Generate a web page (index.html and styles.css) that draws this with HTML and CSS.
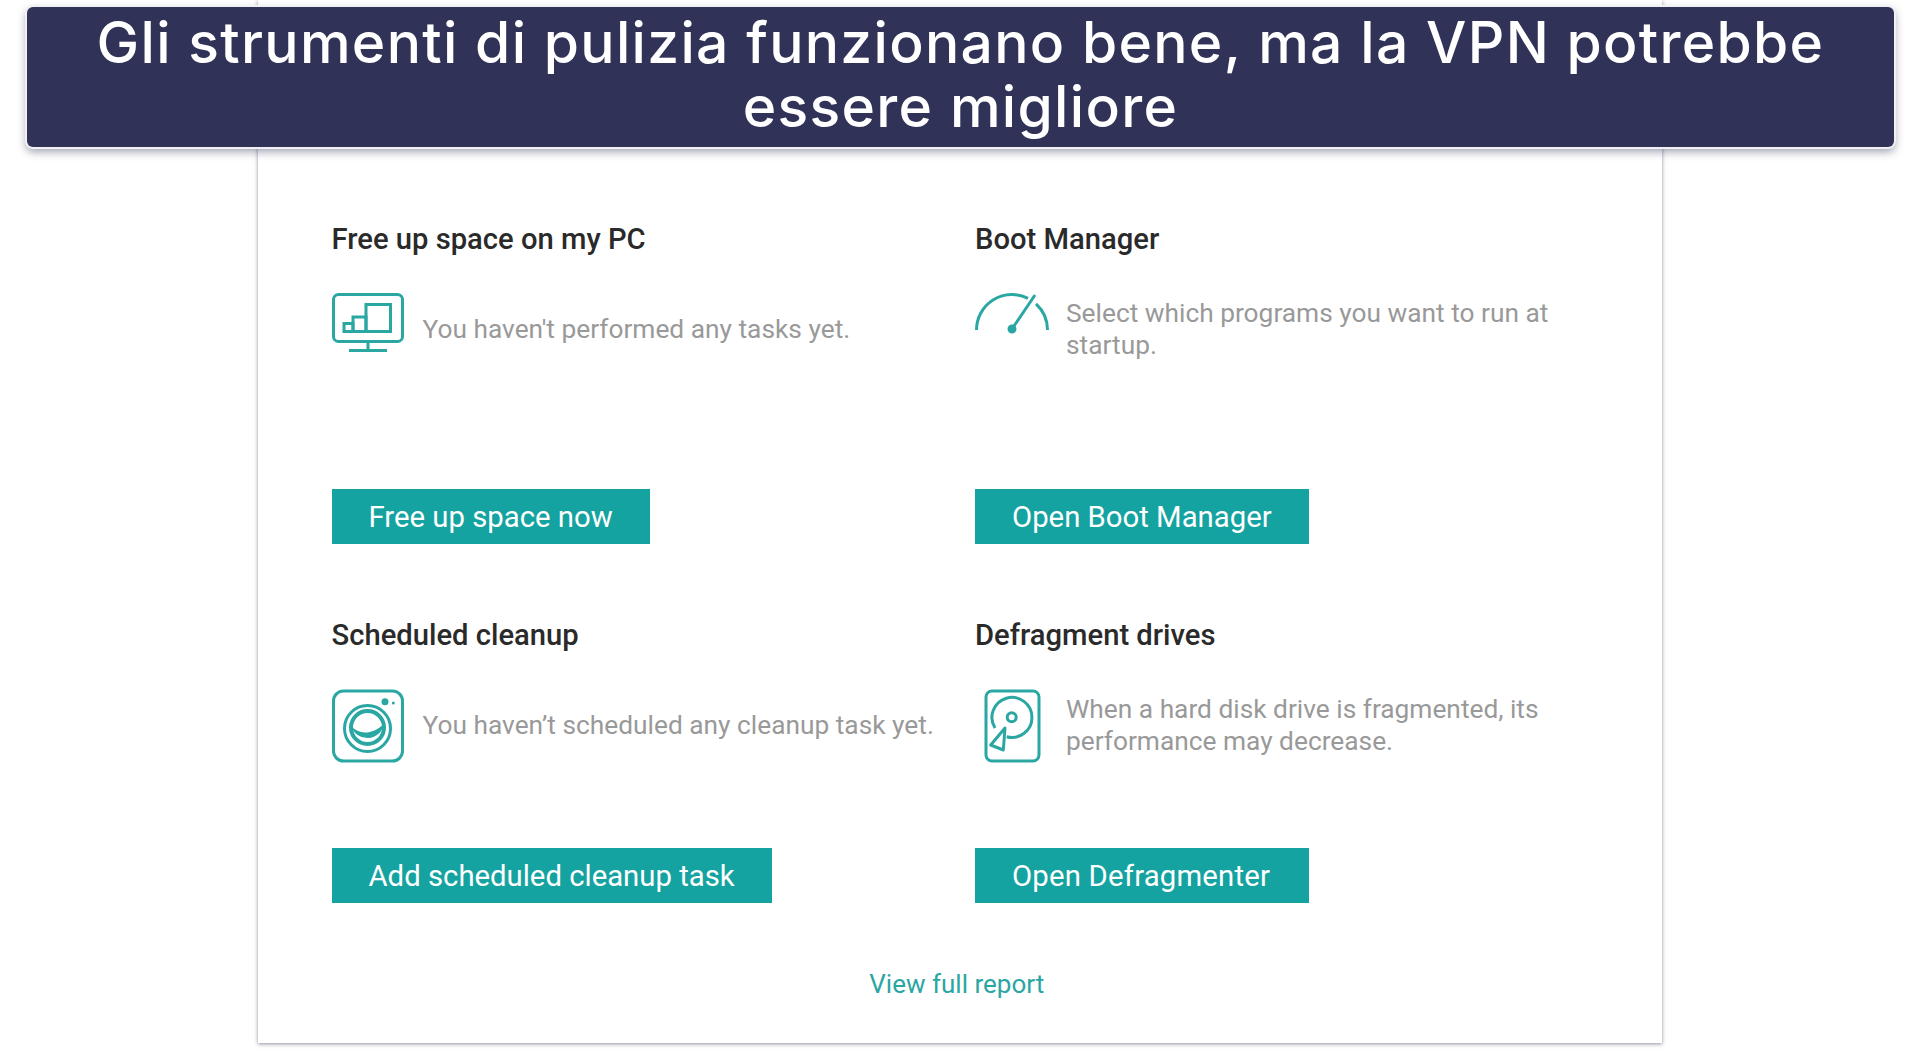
FILE: index.html
```html
<!DOCTYPE html>
<html lang="en">
<head>
    <meta charset="UTF-8">
    <meta name="viewport" content="width=device-width, initial-scale=1.0">
    <title>Gli strumenti di pulizia</title>
    <link rel="stylesheet" href="styles.css">
</head>
<body>
    <div class="card">
        <div class="grid">
            <div class="tool">
                <h2>Free up space on my PC</h2>
                <div class="info">
                    <svg class="icon" viewBox="0 0 74 74" fill="none" stroke="#2aa6a3" stroke-width="3">
                        <rect x="1.5" y="1.5" width="69" height="47" rx="5"/>
                        <path d="M36 49v8M17 57.500h38"/>
                        <rect x="34" y="11.500" width="24.500" height="27"/>
                        <rect x="21" y="24" width="13" height="14.500"/>
                        <rect x="12" y="30.500" width="9" height="8"/>
                    </svg>
                    <p>You haven't performed any tasks yet.</p>
                </div>
                <a class="btn" href="#">Free up space now</a>
            </div>
            <div class="tool">
                <h2>Boot Manager</h2>
                <div class="info">
                    <svg class="icon" viewBox="0 0 74 74" fill="none" stroke="#2aa6a3" stroke-width="3">
                        <path d="M1.500 37A35.500 35.500 0 0 1 53 5.300M61 10.800A35.500 35.500 0 0 1 72.500 37"/>
                        <path d="M37 36L60 2"/>
                        <circle cx="37" cy="36" r="3" fill="#2aa6a3"/>
                    </svg>
                    <p>Select which programs you want to run at startup.</p>
                </div>
                <a class="btn" href="#">Open Boot Manager</a>
            </div>
            <div class="tool">
                <h2>Scheduled cleanup</h2>
                <div class="info">
                    <svg class="icon" viewBox="0 0 74 74" fill="none" stroke="#2aa6a3" stroke-width="3">
                        <rect x="1.500" y="2" width="69" height="70" rx="10"/>
                        <circle cx="35.500" cy="39.500" r="23"/>
                        <circle cx="35.500" cy="38.500" r="16.500" stroke-width="4"/>
                        <path d="M19 37C27 46 40 46 52 35A17 17 0 0 1 19 37z" fill="#2aa6a3" stroke="none"/>
                        <circle cx="53" cy="12.700" r="3.500" fill="#2aa6a3" stroke="none"/>
                        <circle cx="61.300" cy="14" r="1.500" fill="#2aa6a3" stroke="none"/>
                    </svg>
                    <p>You haven’t scheduled any cleanup task yet.</p>
                </div>
                <a class="btn" href="#">Add scheduled cleanup task</a>
            </div>
            <div class="tool">
                <h2>Defragment drives</h2>
                <div class="info">
                    <svg class="icon" viewBox="0 0 74 74" fill="none" stroke="#2aa6a3" stroke-width="3">
                        <rect x="11" y="2" width="53" height="70" rx="6"/>
                        <path d="M31.700 47.700A20 20 0 1 0 20 39"/>
                        <circle cx="36.700" cy="28.300" r="4.500"/>
                        <path d="M30 39L15.700 56L28.300 61z" stroke-linejoin="round"/>
                    </svg>
                    <p>When a hard disk drive is fragmented, its performance may decrease.</p>
                </div>
                <a class="btn btn-wide" href="#">Open Defragmenter</a>
            </div>
        </div>
        <a class="report" href="#">View full report</a>
    </div>
    <div class="banner">Gli strumenti di pulizia funzionano bene, ma la VPN potrebbe essere migliore</div>
</body>
</html>
```

FILE: styles.css
```css
html, body {
    height: 100%;
}
body {
    font-family: Roboto, sans-serif;
    margin: 0;
    padding: 0;
    background-color: #fff;
    overflow: hidden;
}
.banner {
    position: absolute;
    top: 7px;
    left: 27px;
    width: 1867px;
    height: 140px;
    box-sizing: border-box;
    padding: 4px 40px 0;
    background-color: #303257;
    border-radius: 6px;
    box-shadow: 0 0 0 2px #f0f0f5, 0 4px 8px 1px rgba(48, 50, 87, 0.45);
    color: #fff;
    font-family: Inter, sans-serif;
    font-size: 57px;
    font-weight: 500;
    letter-spacing: 1.300px;
    line-height: 64px;
    text-align: center;
}
.card {
    width: 1404px;
    height: 1043px;
    margin-left: 258px;
    box-sizing: border-box;
    padding: 223px 0 0 73.500px;
    background-color: #fff;
    box-shadow: 0 1px 4px rgba(48, 50, 87, 0.55);
}
.grid {
    display: grid;
    grid-template-columns: 643.500px 581px;
    grid-template-rows: 321px 284px;
    row-gap: 75px;
}
h2 {
    margin: 0;
    font-size: 29.200px;
    font-weight: 500;
    line-height: 32px;
    color: #2a2a2a;
}
.tool {
    display: flex;
    flex-direction: column;
    align-items: flex-start;
}
.info {
    display: flex;
    align-items: center;
    gap: 17px;
    margin-top: 38px;
    height: 74px;
}
.icon {
    width: 74px;
    height: 74px;
    flex: none;
}
.info p {
    margin: 0 0 2px;
    font-size: 26.300px;
    line-height: 32px;
    color: #999;
}
.btn {
    margin-top: auto;
    padding: 0 37px;
    height: 55px;
    line-height: 57px;
    background-color: #14a3a0;
    color: #fff;
    font-size: 29.300px;
    text-decoration: none;
}
.btn-wide {
    box-sizing: border-box;
    min-width: 334px;
    letter-spacing: 0.200px;
}
.report {
    display: block;
    margin-top: 65px;
    margin-right: 80px;
    text-align: center;
    font-size: 26px;
    line-height: 32px;
    color: #2aa6a3;
    text-decoration: none;
}
```
